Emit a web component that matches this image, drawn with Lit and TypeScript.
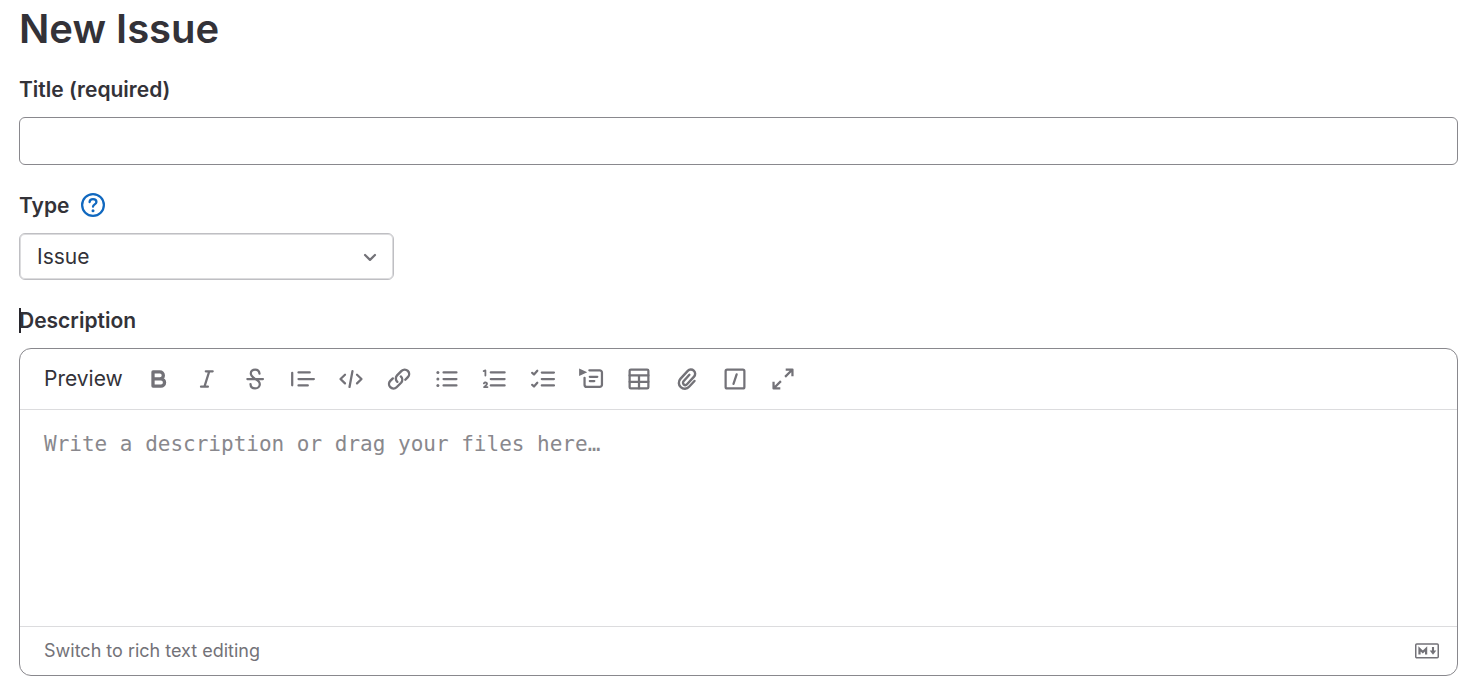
import { LitElement, html, css, svg, SVGTemplateResult } from "lit";
import { customElement } from "lit/decorators.js";

interface Tool {
  label: string;
  icon: SVGTemplateResult;
}

const tools: Tool[] = [
  {
    label: "Add bold text",
    icon: svg`<path stroke-width="2.200" stroke-linejoin="round" d="M4 3.300h4.600a2.300 2.300 0 0 1 0 4.600H4zM4 7.900h5.300a2.400 2.400 0 0 1 0 4.800H4z"/>`,
  },
  {
    label: "Add italic text",
    icon: svg`<path d="M7.200 2.900h4.600M4 13.100h4.600M9.500 2.900 6.300 13.100"/>`,
  },
  {
    label: "Add strikethrough text",
    icon: svg`<path d="M2.900 8h10.400M11 4.400C10.800 2.700 9.700 1.700 8.100 1.700 6.400 1.700 5.200 2.800 5.200 4.300c0 1.500 1 2.300 2.900 3.700 2.100 1 3.100 2 3.100 3.500 0 1.600-1.300 2.800-3.100 2.800-1.700 0-3-1.100-3.100-2.900"/>`,
  },
  {
    label: "Insert a quote",
    icon: svg`<path d="M.8 3.900v8.300M5 3.600h7.500M5 8h10.250M5 12.300h6.200"/>`,
  },
  {
    label: "Insert code",
    icon: svg`<path d="M4 5.200 1 8l3 2.900M12 5.200 15 8l-3 2.900M9 2.700 7 13.300"/>`,
  },
  {
    label: "Add a link",
    icon: svg`<path stroke-width="1.600" d="M6.900 9.900a3 3 0 0 1-.2-4.300l3-3a2.970 2.970 0 0 1 4.200 4.200l-1.700 1.700M9.200 6.300a3 3 0 0 1 .2 4.200l-3 3a2.970 2.970 0 0 1-4.200-4.200l1.700-1.700"/>`,
  },
  {
    label: "Add a bullet list",
    icon: svg`<path d="M5.700 3.600h8.600M5.700 8h8.600M5.700 12.300h8.600"/><g fill="currentColor" stroke="none"><circle cx="1.900" cy="3.600" r="1"/><circle cx="1.900" cy="8" r="1"/><circle cx="1.900" cy="12.300" r="1"/></g>`,
  },
  {
    label: "Add a numbered list",
    icon: svg`<path d="M5.200 3.600h9.200M5.200 8h9.200M5.200 12.300h9.200"/><path stroke-width="1.200" d="M.4 2.700 1.600 2.300V5.700M.6 10.900c.4-.8 2.100-.8 2.100.3 0 .8-1.200 1.200-2 2.200h2.300"/>`,
  },
  {
    label: "Add a checklist",
    icon: svg`<path d="M7.200 3.700h8.100M7.200 8h8.100M7.200 12.300h8.100M.8 3.900l1.200 1.100L4.200 2.500M.8 11.900l1.200 1.100 2.200-2.500"/>`,
  },
  {
    label: "Add a collapsible section",
    icon: svg`<path fill="currentColor" stroke="none" d="M.1 1v5l5.400-2.500z"/><path d="M6.900 2.200h6.900a1.500 1.500 0 0 1 1.500 1.500v8.100a1.500 1.500 0 0 1-1.500 1.500H5.200a1.500 1.500 0 0 1-1.500-1.500V7.200M7.200 6.500h5M7.200 9.400h3"/>`,
  },
  {
    label: "Add a table",
    icon: svg`<rect x="1.750" y="1.750" width="12.500" height="12.500" rx=".8"/><path d="M1.750 5.600h12.500M1.750 9.900h12.500M8 5.600v8.600"/>`,
  },
  {
    label: "Attach a file or image",
    icon: svg`<path stroke-width="1.600" d="M13 9.300l-3.600 3.900a3.900 3.900 0 0 1-5.800-5.300l4.900-5.300a2.800 2.800 0 0 1 4.200 3.800l-4.700 5.100a1.500 1.500 0 0 1-2.300-2l3.900-4.300"/>`,
  },
  {
    label: "Add a quick action",
    icon: svg`<rect x="1.750" y="1.750" width="12.500" height="12.500" rx="1"/><path d="M9.100 4.900 7 11.300"/>`,
  },
  {
    label: "Go full screen",
    icon: svg`<path stroke-linecap="butt" d="M9.800 1.700h4.500v4.500M14.300 1.700 9.400 6.600M1.700 9.800v4.500h4.500M1.700 14.300l4.900-4.900"/>`,
  },
];

@customElement("markdown-editor")
export class MarkdownEditor extends LitElement {
  static styles = css`
    :host {
      display: block;
      border: 1px solid #89888d;
      border-radius: 12px;
      overflow: hidden;
      background: #fff;
    }
    button,
    textarea {
      margin: 0;
      border: 0;
      background: none;
      font: inherit;
    }
    button {
      cursor: pointer;
    }
    .toolbar {
      display: flex;
      flex-wrap: wrap;
      align-items: center;
      gap: 12px;
      padding: 12px;
      border-bottom: 1px solid #dcdcde;
    }
    .preview {
      height: 36px;
      padding: 0 6px 0 12px;
      color: #333238;
      line-height: 36px;
    }
    .tool {
      display: grid;
      place-items: center;
      width: 36px;
      height: 36px;
      padding: 0;
      color: #737278;
    }
    .icon {
      display: block;
      width: 24px;
      height: 24px;
      overflow: visible;
      fill: none;
      stroke: currentColor;
      stroke-width: 1.5;
      stroke-linecap: round;
      stroke-linejoin: round;
    }
    .text {
      display: block;
      box-sizing: border-box;
      width: 100%;
      min-height: 216px;
      padding: 18px 24px;
      color: #333238;
      font-family: "DejaVu Sans Mono", monospace;
      font-size: 21px;
      line-height: 32px;
      resize: none;
      outline: 0;
    }
    .text::placeholder {
      color: #89888d;
      opacity: 1;
    }
    .footer {
      display: flex;
      align-items: center;
      justify-content: space-between;
      height: 48px;
      padding: 0 18px 0 24px;
      border-top: 1px solid #dcdcde;
      color: #737278;
    }
    .switch {
      padding: 0;
      color: inherit;
      font-size: 18px;
      line-height: 24px;
    }
    .markdown {
      display: block;
      color: #737278;
    }
  `;

  render() {
    return html`
      <div class="toolbar" role="toolbar" aria-label="Formatting">
        <button class="preview" type="button">Preview</button>
        ${tools.map(
          (tool) => html`
            <button class="tool" type="button" aria-label=${tool.label}>
              <svg class="icon" viewBox="0 0 16 16" aria-hidden="true">${tool.icon}</svg>
            </button>
          `
        )}
      </div>
      <textarea
        class="text"
        aria-label="Description"
        placeholder="Write a description or drag your files here…"
      ></textarea>
      <div class="footer">
        <button class="switch" type="button">Switch to rich text editing</button>
        <a class="markdown" href="#markdown" aria-label="Markdown is supported">
          <svg class="icon" viewBox="0 0 16 16" aria-hidden="true">
            <rect x=".5" y="3.300" width="15" height="9.200" rx=".7" stroke-width="1" />
            <path stroke-linecap="butt" stroke-linejoin="miter" d="M3 10.300V6.600l2.200 2.100 2.200-2.100v3.700" />
            <path stroke-width="1.400" stroke-linecap="butt" d="M12 5.300v3" />
            <path fill="currentColor" stroke="none" d="M9.800 7.600h4.400L12 10.500z" />
          </svg>
        </a>
      </div>
    `;
  }
}

@customElement("app-root")
export class AppRoot extends LitElement {
  static styles = css`
    :host {
      display: block;
      padding: 0 15px 6px 19px;
      background: #fff;
      color: #333238;
      font-family: Inter, sans-serif;
      font-size: 21px;
    }
    .heading {
      margin: 0 0 16px;
      font-size: 40px;
      font-weight: 600;
      line-height: 57px;
    }
    .form {
      display: flex;
      flex-direction: column;
      gap: 24px;
    }
    .label {
      display: flex;
      align-items: flex-start;
      gap: 12px;
      margin-bottom: 10px;
      font-weight: 600;
      line-height: 34px;
    }
    .caret {
      position: relative;
    }
    .caret::before {
      content: "";
      position: absolute;
      left: 0;
      top: 4px;
      width: 2px;
      height: 25px;
      background: #28272d;
    }
    .input,
    .select {
      display: block;
      box-sizing: border-box;
      width: 100%;
      margin: 0;
      border-radius: 6px;
      background: #fff;
      color: #333238;
      font: inherit;
    }
    .input {
      height: 48px;
      padding: 0 18px;
      border: 1px solid #89888d;
    }
    .picker {
      display: grid;
      align-items: center;
      max-width: 375px;
    }
    .select {
      grid-area: 1 / 1;
      height: 47px;
      padding: 0 48px 0 17px;
      border: 1px solid #bfbfc3;
      box-shadow: inset 0 0 0 1px #dcdcde;
      appearance: none;
    }
    .chevron {
      grid-area: 1 / 1;
      justify-self: end;
      width: 24px;
      height: 24px;
      margin-right: 12px;
      fill: none;
      stroke: #737278;
      stroke-width: 1.5;
      stroke-linecap: round;
      stroke-linejoin: round;
      pointer-events: none;
    }
    .help {
      display: block;
      padding: 4px 0;
      color: #1068bf;
    }
    .question {
      display: block;
      width: 24px;
      height: 24px;
      fill: none;
      stroke: currentColor;
      stroke-width: 1.5;
      stroke-linecap: round;
      stroke-linejoin: round;
    }
  `;

  render() {
    return html`
      <h1 class="heading">New Issue</h1>
      <form class="form">
        <div>
          <label class="label" for="title">Title (required)</label>
          <input class="input" id="title" type="text" required />
        </div>
        <div>
          <div class="label">
            <label for="type">Type</label>
            <a class="help" href="#types" aria-label="About issue types">
              <svg class="question" viewBox="0 0 16 16" aria-hidden="true">
                <circle cx="8" cy="8" r="7.250" />
                <path d="M5.700 6.100C5.800 4.700 6.700 4 8 4s2.300.8 2.300 2c0 1.600-2.300 1.600-2.300 3.100" />
                <circle cx="8" cy="11.800" r="1" fill="currentColor" stroke="none" />
              </svg>
            </a>
          </div>
          <div class="picker">
            <select class="select" id="type">
              <option>Issue</option>
            </select>
            <svg class="chevron" viewBox="0 0 16 16" aria-hidden="true">
              <path d="M4.700 6.700 8 9.900l3.300-3.200" />
            </svg>
          </div>
        </div>
        <div>
          <div class="label caret">Description</div>
          <markdown-editor></markdown-editor>
        </div>
      </form>
    `;
  }
}
